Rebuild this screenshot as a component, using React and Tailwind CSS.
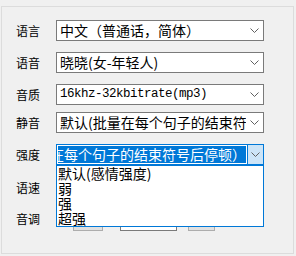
const Chevron = () => (
  <svg width="9" height="5" viewBox="0 0 9 5">
    <path d="M0.5 0.5 L4.5 4.5 L8.5 0.5" stroke="#606060" fill="none" strokeWidth="1" />
  </svg>
);

const Combo = ({ children, mono }) => (
  <div className="flex h-[21px] w-[208px] items-center border border-[#7a7a7a] bg-white">
    <div
      className={`flex-1 overflow-hidden whitespace-nowrap pl-[3px] leading-[19px] text-black ${
        mono ? "font-['Liberation_Mono',monospace] text-[12.5px] tracking-[-0.5px]" : "text-[14px]"
      }`}
    >
      {children}
    </div>
    <div className="flex w-[17px] shrink-0 items-center justify-center">
      <Chevron />
    </div>
  </div>
);

const Label = ({ children }) => (
  <div className="w-[40px] shrink-0 text-[12px] leading-[16px] text-black">{children}</div>
);

const strengthOptions = ["默认(感情强度)", "弱", "强", "超强"];

export default function App() {
  return (
    <div className="h-[256px] w-[296px] overflow-hidden bg-[#f0f0f0] font-['Noto_Sans_CJK_SC',sans-serif]">
      <div className="ml-[1px] mt-[6px] h-[248px] w-[293px] border border-[#dcdcdc] pl-[14px] pt-[13px]">
        {/* 语言 */}
        <div className="flex h-[21px] items-center">
          <Label>语言</Label>
          <Combo>中文（普通话，简体）</Combo>
        </div>

        {/* 语音 */}
        <div className="mt-[11px] flex h-[21px] items-center">
          <Label>语音</Label>
          <Combo>晓晓(女-年轻人)</Combo>
        </div>

        {/* 音质 */}
        <div className="mt-[11px] flex h-[21px] items-center">
          <Label>音质</Label>
          <Combo mono>16khz-32kbitrate(mp3)</Combo>
        </div>

        {/* 静音 */}
        <div className="mt-[7px] flex h-[21px] items-center">
          <Label>静音</Label>
          <Combo>默认(批量在每个句子的结束符号后停顿）</Combo>
        </div>

        {/* 强度 - open dropdown */}
        <div className="mt-[11px] flex h-[21px] items-center">
          <Label>强度</Label>
          <div className="relative">
            <div className="flex h-[21px] w-[208px] border border-[#0078d7] bg-white">
              <div className="m-[1px] flex flex-1 justify-end overflow-hidden whitespace-nowrap bg-[#0078d7] text-[14px] leading-[17px] text-white">
                默认(批量在每个句子的结束符号后停顿）
              </div>
              <div className="flex w-[16px] shrink-0 items-center justify-center border-l border-[#0078d7] bg-[#cce4f7]">
                <Chevron />
              </div>
            </div>
            <div className="absolute left-0 top-[21px] z-10 w-[208px] border border-[#0078d7] bg-white">
              {strengthOptions.map((opt) => (
                <div key={opt} className="h-[15px] whitespace-nowrap pl-[1px] text-[14px] leading-[15px] text-black">
                  {opt}
                </div>
              ))}
            </div>
          </div>
        </div>

        {/* 语速 */}
        <div className="mt-[12px] flex h-[21px] items-center">
          <Label>语速</Label>
        </div>

        {/* 音调 */}
        <div className="mt-[9px] flex h-[24px] items-center">
          <Label>音调</Label>
          <div className="flex h-[24px] items-end">
            <div className="ml-[17px] h-[20px] w-[30px] border border-[#adadad] bg-[#e1e1e1]" />
            <div className="ml-[17px] h-[20px] w-[57px] border border-[#7a7a7a] bg-white" />
            <div className="ml-[11px] h-[20px] w-[27px] border border-[#adadad] bg-[#e1e1e1]" />
          </div>
        </div>
      </div>
    </div>
  );
}
